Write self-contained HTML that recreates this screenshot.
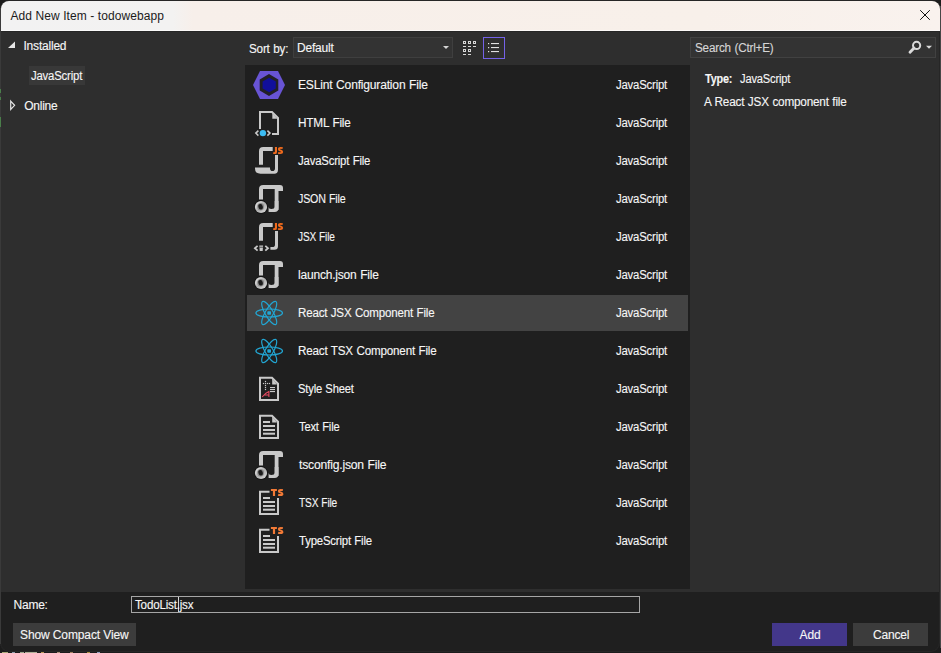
<!DOCTYPE html>
<html><head><meta charset="utf-8">
<style>
*{margin:0;padding:0;box-sizing:border-box}
html,body{width:941px;height:653px;overflow:hidden;background:#1c1c1c;font-family:"Liberation Sans",sans-serif;font-size:12px;color:#f6f6f6;position:relative}
.a{position:absolute}
.t{position:absolute;white-space:nowrap;line-height:12px;font-size:12px;-webkit-text-stroke:0.12px currentColor}
svg{position:absolute;overflow:visible}
</style></head><body>
<!-- background scraps -->
<div class="a" style="left:2px;top:652px;width:6px;height:1px;background:#a8a878"></div><div class="a" style="left:12px;top:652px;width:3px;height:1px;background:#8a9aa8"></div><div class="a" style="left:20px;top:652px;width:4px;height:1px;background:#a0a890"></div><div class="a" style="left:25px;top:652px;width:12px;height:1px;background:#b0b098"></div><div class="a" style="left:41px;top:652px;width:3px;height:1px;background:#b89858"></div><div class="a" style="left:57px;top:652px;width:3px;height:1px;background:#a89078"></div><div class="a" style="left:70px;top:652px;width:3px;height:1px;background:#a08060"></div><div class="a" style="left:87px;top:652px;width:3px;height:1px;background:#a89040"></div><div class="a" style="left:97px;top:652px;width:3px;height:1px;background:#90a0c0"></div>
<!-- window -->
<div class="a" style="left:1px;top:1px;width:938px;height:650px;background:#2e2e2e;border-radius:8px;box-shadow:0 0 0 1px #262626"></div>
<div class="a" style="left:940px;top:6px;width:1px;height:642px;background:#474747"></div>
<div class="a" style="left:0px;top:8px;width:1px;height:636px;background:#3a3a3a"></div>
<div class="a" style="left:0;top:89px;width:1px;height:4px;background:#4a7e4a"></div>
<div class="a" style="left:0;top:97px;width:1px;height:3px;background:#4a7e4a"></div>
<div class="a" style="left:0;top:117px;width:1px;height:10px;background:#4a7e4a"></div>

<div class="a" style="left:1px;top:1px;width:939px;height:30px;border-radius:8px 8px 0 0;background:linear-gradient(90deg,#f2f2f2 0px,#f3f2f1 172px,#f7efea 192px,#f8f0ea 700px,#f9f2ee 939px)"></div>
<div class="a" style="left:1px;top:30px;width:939px;height:1px;background:rgba(255,255,255,0.6)"></div>
<div class="a" style="left:1px;top:31px;width:938px;height:1px;background:#262626"></div>
<svg style="left:920px;top:10px" width="10" height="10" viewBox="0 0 10 10"><path d="M0.2 0.2L9.8 9.8M9.8 0.2L0.2 9.8" stroke="#111" stroke-width="1"/></svg>
<!-- tree -->
<svg style="left:7px;top:41px" width="9" height="8" viewBox="0 0 9 8"><path d="M8 0.5V7H1Z" fill="#e6e6e6"/></svg>
<div class="a" style="left:29px;top:66px;width:56px;height:19px;background:#383838"></div>
<svg style="left:10px;top:100px" width="6" height="11" viewBox="0 0 6 11"><path d="M0.7 1.1L4.6 5.3L0.7 9.5Z" fill="none" stroke="#e6e6e6" stroke-width="1.2"/></svg>
<!-- toolbar -->
<div class="a" style="left:293px;top:37px;width:160px;height:21px;background:#333333;border:1px solid #3f3f3f"></div>
<svg style="left:443px;top:46px" width="6" height="3" viewBox="0 0 6 3"><path d="M0 0H6L3 3Z" fill="#d4d4d4"/></svg>
<svg style="left:463px;top:41px" width="14" height="14" viewBox="0 0 14 14" fill="#d8d8d8"><path fill-rule="evenodd" d="M0 0h3v3h-3zM1 1v1h1v-1zM5 0h3v3h-3zM6 1v1h1v-1zM10 0h3v3h-3zM11 1v1h1v-1zM0 8h3v3h-3zM1 9v1h1v-1zM5 8h3v3h-3zM6 9v1h1v-1z"/><rect x="0" y="5" width="3" height="1"/><rect x="5" y="5" width="3" height="1"/><rect x="10" y="5" width="3" height="1"/><rect x="0" y="13" width="3" height="1"/><rect x="5" y="13" width="3" height="1"/></svg>
<div class="a" style="left:483px;top:37px;width:22px;height:22px;border:1.2px solid #7462e8"></div>
<svg style="left:487px;top:42px" width="14" height="11" viewBox="0 0 14 11" fill="#e0e0e0">
  <rect x="1" y="1" width="1.2" height="1.2"/><rect x="4" y="1" width="8" height="1.1"/>
  <rect x="1" y="5" width="1.2" height="1.2"/><rect x="4" y="5" width="8" height="1.1"/>
  <rect x="1" y="9" width="1.2" height="1.2"/><rect x="4" y="9" width="8" height="1.1"/>
</svg>
<!-- search -->
<div class="a" style="left:690px;top:37px;width:246px;height:21px;background:#333333;border:1px solid #414141"></div>
<svg style="left:906px;top:39px" width="28" height="16" viewBox="0 0 28 16">
  <circle cx="10.6" cy="6.4" r="3.6" fill="none" stroke="#dadada" stroke-width="2"/>
  <path d="M8.1 9L4 13.3" stroke="#dadada" stroke-width="2.8" stroke-linecap="round"/>
  <path d="M20 6.7H26L23 9.7Z" fill="#dadada"/>
</svg>
<!-- list -->
<div class="a" style="left:245px;top:65px;width:445px;height:524px;background:#1f1f1f"></div>
<div class="a" style="left:247px;top:295px;width:441px;height:36px;background:#434343"></div>
<!-- icons -->
<svg style="left:251px;top:67px" width="36" height="36" viewBox="0 0 36 36"><path d="M9 4H27L34 18L27 32H9L2 18Z" fill="#6854d4"/>
<path d="M18 7.1L27.3 12.6V23.5L18 29L8.7 23.5V12.6Z" fill="#222026"/>
<path d="M18.2 10.7L24.8 14.4V21.5L18.2 25.2L11.6 21.5V14.4Z" fill="#110f9c"/></svg>
<svg style="left:251px;top:105px" width="36" height="36" viewBox="0 0 36 36"><path d="M9 24V7H21L27 13V29H21" fill="none" stroke="#c9c9c9" stroke-width="2" stroke-linejoin="miter"/>
<path d="M21.3 8.2V13.8H26.4Z" fill="#c9c9c9"/>
<path d="M7.4 25.6L4.8 28.1L7.4 30.6M16.4 25.6L19 28.1L16.4 30.6" fill="none" stroke="#c9c9c9" stroke-width="1.5"/>
<circle cx="11.9" cy="28.1" r="3.2" fill="#3cbcf3"/></svg>
<svg style="left:251px;top:143px" width="36" height="36" viewBox="0 0 36 36"><path d="M8 21.7V8.2Q8 4 12.2 4H21.7V8H12V21.7Z" fill="#c9c9c9"/>
<path d="M23.9 3.9H26V8.9Q26 11.1 23.7 11.1H22.2V9.2H23.2Q23.9 9.2 23.9 8.5Z" fill="#f26b1d"/>
<path d="M31.7 5.1Q30.9 4.9 29.6 4.9Q27.9 4.9 27.9 6.2Q27.9 7.1 29.6 7.5Q31.2 7.9 31.2 9Q31.2 10.1 29.5 10.1Q28.1 10.1 27.1 9.8" fill="none" stroke="#f26b1d" stroke-width="1.9"/>
<path d="M4 24.5H19V25.2Q19 28 21.5 28Q24 28 24 25.2V12H27V26.8Q27 30.7 23.3 30.7H9.5Q4 30.7 4 25.5Z" fill="#c9c9c9"/></svg>
<svg style="left:251px;top:181px" width="36" height="36" viewBox="0 0 36 36"><defs><linearGradient id="dn3" x1="0" y1="0" x2="1" y2="1"><stop offset="0" stop-color="#f0f0f0"/><stop offset="0.5" stop-color="#b0b0b0"/><stop offset="1" stop-color="#e0e0e0"/></linearGradient></defs>
<path d="M8 18.5V8.2Q8 4 12.2 4H29Q32 4 32 7V10H27.5V29H23.7V8H12V18.5Z" fill="#c9c9c9"/>
<path d="M17.6 25V25.5Q17.6 28 20.3 28Q23.7 28 23.7 25.5V20H27.5V27Q27.5 31 23.5 31H17.6Z" fill="#c9c9c9"/>
<circle cx="10" cy="26" r="7" fill="#151515"/>
<circle cx="10" cy="26" r="6.1" fill="url(#dn3)"/>
<ellipse cx="9.6" cy="25.8" rx="3.4" ry="3.7" fill="#8a8a8a"/>
<ellipse cx="9.6" cy="25.8" rx="2.2" ry="2.8" transform="rotate(-15 9.6 25.8)" fill="#1c1c1c"/></svg>
<svg style="left:251px;top:219px" width="36" height="36" viewBox="0 0 36 36"><path d="M8 21.7V8.2Q8 4 12.2 4H21.7V8H12V21.7Z" fill="#c9c9c9"/>
<path d="M23.9 3.9H26V8.9Q26 11.1 23.7 11.1H22.2V9.2H23.2Q23.9 9.2 23.9 8.5Z" fill="#f26b1d"/>
<path d="M31.7 5.1Q30.9 4.9 29.6 4.9Q27.9 4.9 27.9 6.2Q27.9 7.1 29.6 7.5Q31.2 7.9 31.2 9Q31.2 10.1 29.5 10.1Q28.1 10.1 27.1 9.8" fill="none" stroke="#f26b1d" stroke-width="1.9"/>
<path d="M24 12H27V27.2Q27 30.7 23.3 30.7H19.4V28H21.4Q24 28 24 25.4Z" fill="#c9c9c9"/>
<path d="M6.6 26.8L3.9 29.2L6.6 31.6M14.3 26.8L17 29.2L14.3 31.6" fill="none" stroke="#c9c9c9" stroke-width="1.8"/>
<path d="M8.3 26.5H12.1L11.7 31.9H8.7Z" fill="#c9c9c9"/><rect x="8.3" y="27.8" width="3.8" height="0.7" fill="#1f1f1f"/></svg>
<svg style="left:251px;top:257px" width="36" height="36" viewBox="0 0 36 36"><defs><linearGradient id="dn5" x1="0" y1="0" x2="1" y2="1"><stop offset="0" stop-color="#f0f0f0"/><stop offset="0.5" stop-color="#b0b0b0"/><stop offset="1" stop-color="#e0e0e0"/></linearGradient></defs>
<path d="M8 18.5V8.2Q8 4 12.2 4H29Q32 4 32 7V10H27.5V29H23.7V8H12V18.5Z" fill="#c9c9c9"/>
<path d="M17.6 25V25.5Q17.6 28 20.3 28Q23.7 28 23.7 25.5V20H27.5V27Q27.5 31 23.5 31H17.6Z" fill="#c9c9c9"/>
<circle cx="10" cy="26" r="7" fill="#151515"/>
<circle cx="10" cy="26" r="6.1" fill="url(#dn5)"/>
<ellipse cx="9.6" cy="25.8" rx="3.4" ry="3.7" fill="#8a8a8a"/>
<ellipse cx="9.6" cy="25.8" rx="2.2" ry="2.8" transform="rotate(-15 9.6 25.8)" fill="#1c1c1c"/></svg>
<svg style="left:251px;top:295px" width="36" height="36" viewBox="0 0 36 36"><g fill="none" stroke="#22a6d3" stroke-width="1.2">
<ellipse cx="18.2" cy="18" rx="13.3" ry="4"/>
<ellipse cx="18.2" cy="18" rx="13.3" ry="4" transform="rotate(60 18.2 18)"/>
<ellipse cx="18.2" cy="18" rx="13.3" ry="4" transform="rotate(-60 18.2 18)"/></g>
<rect x="16.3" y="16.2" width="3.7" height="3.5" rx="0.7" fill="#22a6d3"/></svg>
<svg style="left:251px;top:333px" width="36" height="36" viewBox="0 0 36 36"><g fill="none" stroke="#22a6d3" stroke-width="1.2">
<ellipse cx="18.2" cy="18" rx="13.3" ry="4"/>
<ellipse cx="18.2" cy="18" rx="13.3" ry="4" transform="rotate(60 18.2 18)"/>
<ellipse cx="18.2" cy="18" rx="13.3" ry="4" transform="rotate(-60 18.2 18)"/></g>
<rect x="16.3" y="16.2" width="3.7" height="3.5" rx="0.7" fill="#22a6d3"/></svg>
<svg style="left:251px;top:371px" width="36" height="36" viewBox="0 0 36 36"><path d="M9 6.7H21L27 12.7V28.9H9Z" fill="none" stroke="#c9c9c9" stroke-width="2"/>
<path d="M21.2 7.8V13.4H26Z" fill="#c9c9c9"/><g fill="#c9c9c9"><rect x="13.9" y="9.9" width="1.2" height="1.2"/><rect x="13.9" y="11.9" width="1.2" height="1.2"/><rect x="13.9" y="13.9" width="1.2" height="1.2"/><rect x="13.9" y="15.9" width="1.2" height="1.2"/><rect x="13.9" y="17.9" width="1.2" height="1.2"/><rect x="11.9" y="11.9" width="1.2" height="1.2"/><rect x="15.9" y="11.9" width="1.2" height="1.2"/><rect x="17.9" y="11.9" width="1.2" height="1.2"/>
<rect x="19" y="16" width="5" height="1.1"/><rect x="19" y="18" width="5" height="1.1"/><rect x="19" y="20" width="5" height="1.1"/></g>
<path d="M11.2 26Q13.8 22.2 17.9 20.5V26M13.6 23.9H17.9" fill="none" stroke="#ec4a62" stroke-width="1.05"/></svg>
<svg style="left:251px;top:409px" width="36" height="36" viewBox="0 0 36 36"><path d="M9 6.7H21L27 12.7V28.9H9Z" fill="none" stroke="#c9c9c9" stroke-width="2"/>
<path d="M21.2 7.8V13.4H26Z" fill="#c9c9c9"/><g fill="#c9c9c9"><rect x="12" y="12" width="7" height="2"/><rect x="12" y="16" width="12" height="2"/><rect x="12" y="20" width="12" height="2"/><rect x="12" y="23.7" width="12" height="2"/></g></svg>
<svg style="left:251px;top:447px" width="36" height="36" viewBox="0 0 36 36"><defs><linearGradient id="dn10" x1="0" y1="0" x2="1" y2="1"><stop offset="0" stop-color="#f0f0f0"/><stop offset="0.5" stop-color="#b0b0b0"/><stop offset="1" stop-color="#e0e0e0"/></linearGradient></defs>
<path d="M8 18.5V8.2Q8 4 12.2 4H29Q32 4 32 7V10H27.5V29H23.7V8H12V18.5Z" fill="#c9c9c9"/>
<path d="M17.6 25V25.5Q17.6 28 20.3 28Q23.7 28 23.7 25.5V20H27.5V27Q27.5 31 23.5 31H17.6Z" fill="#c9c9c9"/>
<circle cx="10" cy="26" r="7" fill="#151515"/>
<circle cx="10" cy="26" r="6.1" fill="url(#dn10)"/>
<ellipse cx="9.6" cy="25.8" rx="3.4" ry="3.7" fill="#8a8a8a"/>
<ellipse cx="9.6" cy="25.8" rx="2.2" ry="2.8" transform="rotate(-15 9.6 25.8)" fill="#1c1c1c"/></svg>
<svg style="left:251px;top:485px" width="36" height="36" viewBox="0 0 36 36"><path d="M18.5 6.7H9V28.9H27V13" fill="none" stroke="#c9c9c9" stroke-width="2"/><g fill="#c9c9c9"><rect x="12" y="12" width="7" height="2"/><rect x="12" y="16" width="12" height="2"/><rect x="12" y="20" width="12" height="2"/><rect x="12" y="23.7" width="12" height="2"/></g>
<path d="M19.9 3.9H25.9V5.9H24.1V11H21.9V5.9H19.9Z" fill="#f37a36"/>
<path d="M31.9 5.1Q31.1 4.9 29.8 4.9Q27.9 4.9 27.9 6.2Q27.9 7.1 29.7 7.5Q31.4 7.9 31.4 9Q31.4 10.1 29.6 10.1Q28.1 10.1 27.1 9.8" fill="none" stroke="#f37a36" stroke-width="2"/></svg>
<svg style="left:251px;top:523px" width="36" height="36" viewBox="0 0 36 36"><path d="M18.5 6.7H9V28.9H27V13" fill="none" stroke="#c9c9c9" stroke-width="2"/><g fill="#c9c9c9"><rect x="12" y="12" width="7" height="2"/><rect x="12" y="16" width="12" height="2"/><rect x="12" y="20" width="12" height="2"/><rect x="12" y="23.7" width="12" height="2"/></g>
<path d="M19.9 3.9H25.9V5.9H24.1V11H21.9V5.9H19.9Z" fill="#f37a36"/>
<path d="M31.9 5.1Q31.1 4.9 29.8 4.9Q27.9 4.9 27.9 6.2Q27.9 7.1 29.7 7.5Q31.4 7.9 31.4 9Q31.4 10.1 29.6 10.1Q28.1 10.1 27.1 9.8" fill="none" stroke="#f37a36" stroke-width="2"/></svg>
<!-- bottom -->
<div class="a" style="left:1px;top:592px;width:938px;height:59px;background:#1f1f1f;border-radius:0 0 8px 8px"></div>
<div class="a" style="left:131px;top:596px;width:509px;height:17px;border:1px solid #a6a6a6"></div>
<div id="cursor" class="a" style="left:178px;top:597px;width:1px;height:15px;background:#d8d8d8"></div>
<div class="a" style="left:13px;top:623px;width:123px;height:23px;background:#3c3c3c"></div>
<div class="a" style="left:772px;top:623px;width:75px;height:23px;background:#43378a"></div>
<div class="a" style="left:853px;top:623px;width:75px;height:23px;background:#3c3c3c"></div>
<div class="t" style="left:10.50px;top:10.00px;letter-spacing:0.083px;color:#1b1b1b;-webkit-text-stroke:0">Add New Item - todowebapp</div>
<div class="t" style="left:23.50px;top:40.00px;letter-spacing:-0.209px">Installed</div>
<div class="t" style="left:31.00px;top:70.00px;letter-spacing:-0.2px;word-spacing:0.5px;transform:scaleX(0.9460);transform-origin:0 0">JavaScript</div>
<div class="t" style="left:24.30px;top:100.00px;letter-spacing:-0.280px">Online</div>
<div class="t" style="left:249.00px;top:43.00px;letter-spacing:-0.2px;word-spacing:0.5px;transform:scaleX(0.9750);transform-origin:0 0">Sort by:</div>
<div class="t" style="left:296.90px;top:42.00px;letter-spacing:-0.167px">Default</div>
<div class="t" style="left:695.00px;top:42.00px;letter-spacing:-0.2px;word-spacing:0.5px;transform:scaleX(0.9757);transform-origin:0 0;color:#d6d6d6">Search (Ctrl+E)</div>
<div class="t" style="left:704.60px;top:73.00px;letter-spacing:-0.2px;word-spacing:0.5px;transform:scaleX(0.9046);transform-origin:0 0;font-weight:bold">Type:</div>
<div class="t" style="left:740.00px;top:73.00px;letter-spacing:-0.2px;word-spacing:0.5px;transform:scaleX(0.9278);transform-origin:0 0">JavaScript</div>
<div class="t" style="left:704.00px;top:95.50px;letter-spacing:-0.2px;word-spacing:0.5px;transform:scaleX(0.9797);transform-origin:0 0">A React JSX component file</div>
<div class="t" style="left:298.40px;top:79.00px;letter-spacing:-0.2px;word-spacing:0.5px;transform:scaleX(1.0078);transform-origin:0 0">ESLint Configuration File</div>
<div class="t" style="left:616.00px;top:79.00px;letter-spacing:-0.2px;word-spacing:0.5px;transform:scaleX(0.9455);transform-origin:0 0">JavaScript</div>
<div class="t" style="left:298.40px;top:117.00px;letter-spacing:-0.2px;word-spacing:0.5px;transform:scaleX(0.9817);transform-origin:0 0">HTML File</div>
<div class="t" style="left:616.00px;top:117.00px;letter-spacing:-0.2px;word-spacing:0.5px;transform:scaleX(0.9455);transform-origin:0 0">JavaScript</div>
<div class="t" style="left:298.40px;top:155.00px;letter-spacing:-0.2px;word-spacing:0.5px;transform:scaleX(0.9481);transform-origin:0 0">JavaScript File</div>
<div class="t" style="left:616.00px;top:155.00px;letter-spacing:-0.2px;word-spacing:0.5px;transform:scaleX(0.9455);transform-origin:0 0">JavaScript</div>
<div class="t" style="left:298.40px;top:193.00px;letter-spacing:-0.2px;word-spacing:0.5px;transform:scaleX(0.8893);transform-origin:0 0">JSON File</div>
<div class="t" style="left:616.00px;top:193.00px;letter-spacing:-0.2px;word-spacing:0.5px;transform:scaleX(0.9455);transform-origin:0 0">JavaScript</div>
<div class="t" style="left:298.40px;top:231.00px;letter-spacing:-0.2px;word-spacing:0.5px;transform:scaleX(0.8418);transform-origin:0 0">JSX File</div>
<div class="t" style="left:616.00px;top:231.00px;letter-spacing:-0.2px;word-spacing:0.5px;transform:scaleX(0.9455);transform-origin:0 0">JavaScript</div>
<div class="t" style="left:298.40px;top:269.00px;letter-spacing:-0.2px;word-spacing:0.5px;transform:scaleX(1.0006);transform-origin:0 0">launch.json File</div>
<div class="t" style="left:616.00px;top:269.00px;letter-spacing:-0.2px;word-spacing:0.5px;transform:scaleX(0.9455);transform-origin:0 0">JavaScript</div>
<div class="t" style="left:298.40px;top:307.00px;letter-spacing:-0.2px;word-spacing:0.5px;transform:scaleX(0.9646);transform-origin:0 0">React JSX Component File</div>
<div class="t" style="left:616.00px;top:307.00px;letter-spacing:-0.2px;word-spacing:0.5px;transform:scaleX(0.9455);transform-origin:0 0">JavaScript</div>
<div class="t" style="left:298.40px;top:345.00px;letter-spacing:-0.2px;word-spacing:0.5px;transform:scaleX(0.9719);transform-origin:0 0">React TSX Component File</div>
<div class="t" style="left:616.00px;top:345.00px;letter-spacing:-0.2px;word-spacing:0.5px;transform:scaleX(0.9455);transform-origin:0 0">JavaScript</div>
<div class="t" style="left:298.40px;top:383.00px;letter-spacing:-0.2px;word-spacing:0.5px;transform:scaleX(0.9337);transform-origin:0 0">Style Sheet</div>
<div class="t" style="left:616.00px;top:383.00px;letter-spacing:-0.2px;word-spacing:0.5px;transform:scaleX(0.9455);transform-origin:0 0">JavaScript</div>
<div class="t" style="left:299.40px;top:421.00px;letter-spacing:-0.2px;word-spacing:0.5px;transform:scaleX(0.9329);transform-origin:0 0">Text File</div>
<div class="t" style="left:616.00px;top:421.00px;letter-spacing:-0.2px;word-spacing:0.5px;transform:scaleX(0.9455);transform-origin:0 0">JavaScript</div>
<div class="t" style="left:299.40px;top:459.00px;letter-spacing:-0.2px;word-spacing:0.5px;transform:scaleX(1.0117);transform-origin:0 0">tsconfig.json File</div>
<div class="t" style="left:616.00px;top:459.00px;letter-spacing:-0.2px;word-spacing:0.5px;transform:scaleX(0.9455);transform-origin:0 0">JavaScript</div>
<div class="t" style="left:299.40px;top:497.00px;letter-spacing:-0.2px;word-spacing:0.5px;transform:scaleX(0.8484);transform-origin:0 0">TSX File</div>
<div class="t" style="left:616.00px;top:497.00px;letter-spacing:-0.2px;word-spacing:0.5px;transform:scaleX(0.9455);transform-origin:0 0">JavaScript</div>
<div class="t" style="left:299.40px;top:535.00px;letter-spacing:-0.2px;word-spacing:0.5px;transform:scaleX(0.9488);transform-origin:0 0">TypeScript File</div>
<div class="t" style="left:616.00px;top:535.00px;letter-spacing:-0.2px;word-spacing:0.5px;transform:scaleX(0.9455);transform-origin:0 0">JavaScript</div>
<div class="t" style="left:13.60px;top:599.00px;letter-spacing:-0.250px">Name:</div>
<div class="t" style="left:135.00px;top:599.00px;letter-spacing:-0.2px;word-spacing:0.5px;transform:scaleX(0.9677);transform-origin:0 0">TodoList.jsx</div>
<div class="t" style="left:20.00px;top:629.00px;letter-spacing:-0.125px;word-spacing:0.100px">Show Compact View</div>
<div class="t" style="left:799.60px;top:629.00px;letter-spacing:-0.100px">Add</div>
<div class="t" style="left:873.00px;top:629.00px;letter-spacing:-0.200px">Cancel</div>
</body></html>
